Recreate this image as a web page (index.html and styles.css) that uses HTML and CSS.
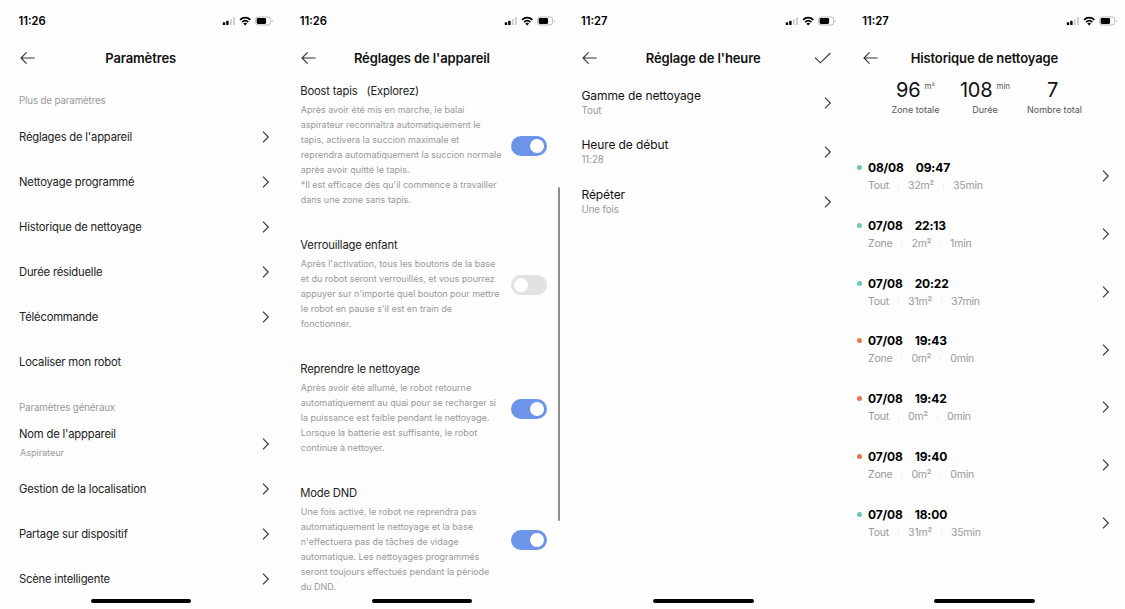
FILE: index.html
```html
<!DOCTYPE html>
<html lang="fr">
<head>
  <meta charset="UTF-8">
  <meta name="viewport" content="width=device-width, initial-scale=1.0">
  <title>Paramètres du robot</title>
  <link rel="stylesheet" href="styles.css">
</head>
<body>
  <!-- Shared icons -->
  <svg class="icon-defs" width="0" height="0">
    <symbol id="icon-back" viewBox="0 0 16 14">
      <path d="M6.6 1.4 L1 7 L6.6 12.6 M1 7 H14.6"/>
    </symbol>
    <symbol id="icon-chevron" viewBox="0 0 8 14">
      <path d="M1 1.6 L6.3 7 L1 12.4"/>
    </symbol>
    <symbol id="icon-check" viewBox="0 0 18 12">
      <path d="M1 5.6 L6.4 10.8 L16.4 1"/>
    </symbol>
    <symbol id="icon-status" viewBox="0 0 52 10">
      <rect x="0.8" y="6.2" width="2.4" height="2.8" rx="0.6"/>
      <rect x="4.2" y="4.8" width="2.4" height="4.2" rx="0.6"/>
      <rect x="7.8" y="3" width="2" height="6" rx="0.5" fill="#d0d0d0"/>
      <rect x="11" y="1" width="2" height="8" rx="0.5" fill="#d0d0d0"/>
      <path d="M18.1 3.8 a7.3 7.3 0 0 1 10.2 0" fill="none" stroke="#000" stroke-width="1.8"/>
      <path d="M20.1 6.1 a4.6 4.6 0 0 1 6.2 0" fill="none" stroke="#000" stroke-width="1.6"/>
      <path d="M23.2 9.5 L21.3 7.6 a2.8 2.8 0 0 1 3.8 0 z"/>
      <rect x="33.6" y="1" width="15" height="8" rx="2.4" fill="none" stroke="#aaa" stroke-width="0.8"/>
      <rect x="34.7" y="2.1" width="9.4" height="5.8" rx="1.3"/>
      <path d="M49.9 3.7 a1.5 1.5 0 0 1 0 2.6 z" fill="#aaa"/>
    </symbol>
  </svg>

  <main class="screens">
    <!-- Settings -->
    <section class="screen">
      <div class="status-bar"><span>11:26</span><svg class="status-icons"><use href="#icon-status"/></svg></div>
      <header class="nav-bar">
        <svg class="back"><use href="#icon-back"/></svg>
        <h1>Paramètres</h1>
      </header>
      <h2 class="group-label">Plus de paramètres</h2>
      <ul class="menu">
        <li><span>Réglages de l'appareil</span><svg class="chevron"><use href="#icon-chevron"/></svg></li>
        <li><span>Nettoyage programmé</span><svg class="chevron"><use href="#icon-chevron"/></svg></li>
        <li><span>Historique de nettoyage</span><svg class="chevron"><use href="#icon-chevron"/></svg></li>
        <li><span>Durée résiduelle</span><svg class="chevron"><use href="#icon-chevron"/></svg></li>
        <li><span>Télécommande</span><svg class="chevron"><use href="#icon-chevron"/></svg></li>
        <li><span>Localiser mon robot</span></li>
      </ul>
      <h2 class="group-label general">Paramètres généraux</h2>
      <ul class="menu">
        <li>
          <div class="name-cell"><span>Nom de l'apppareil</span><small>Aspirateur</small></div>
          <svg class="chevron"><use href="#icon-chevron"/></svg>
        </li>
        <li><span>Gestion de la localisation</span><svg class="chevron"><use href="#icon-chevron"/></svg></li>
        <li><span>Partage sur dispositif</span><svg class="chevron"><use href="#icon-chevron"/></svg></li>
        <li><span>Scène intelligente</span><svg class="chevron"><use href="#icon-chevron"/></svg></li>
      </ul>
      <div class="home-indicator"></div>
    </section>

    <!-- Device settings -->
    <section class="screen">
      <div class="status-bar"><span>11:26</span><svg class="status-icons"><use href="#icon-status"/></svg></div>
      <header class="nav-bar">
        <svg class="back"><use href="#icon-back"/></svg>
        <h1>Réglages de l'appareil</h1>
      </header>
      <div class="options">
        <div class="option">
          <div class="option-text">
            <h3>Boost tapis<span class="paren">(Explorez)</span></h3>
            <p>Après avoir été mis en marche, le balai<br>aspirateur reconnaîtra automatiquement le<br>tapis, activera la succion maximale et<br>reprendra automatiquement la succion normale<br>après avoir quitté le tapis.<br>*Il est efficace dès qu'il commence à travailler<br>dans une zone sans tapis.</p>
          </div>
          <div class="toggle on"></div>
        </div>
        <div class="option">
          <div class="option-text">
            <h3>Verrouillage enfant</h3>
            <p>Après l'activation, tous les boutons de la base<br>et du robot seront verrouillés, et vous pourrez<br>appuyer sur n'importe quel bouton pour mettre<br>le robot en pause s'il est en train de<br>fonctionner.</p>
          </div>
          <div class="toggle"></div>
        </div>
        <div class="option">
          <div class="option-text">
            <h3>Reprendre le nettoyage</h3>
            <p>Après avoir été allumé, le robot retourne<br>automatiquement au quai pour se recharger si<br>la puissance est faible pendant le nettoyage.<br>Lorsque la batterie est suffisante, le robot<br>continue à nettoyer.</p>
          </div>
          <div class="toggle on"></div>
        </div>
        <div class="option">
          <div class="option-text">
            <h3>Mode DND</h3>
            <p>Une fois activé, le robot ne reprendra pas<br>automatiquement le nettoyage et la base<br>n'effectuera pas de tâches de vidage<br>automatique. Les nettoyages programmés<br>seront toujours effectués pendant la période<br>du DND.</p>
          </div>
          <div class="toggle on"></div>
        </div>
      </div>
      <div class="scrollbar"></div>
      <div class="home-indicator"></div>
    </section>

    <!-- Schedule -->
    <section class="screen">
      <div class="status-bar"><span>11:27</span><svg class="status-icons"><use href="#icon-status"/></svg></div>
      <header class="nav-bar">
        <svg class="back"><use href="#icon-back"/></svg>
        <h1>Réglage de l'heure</h1>
        <svg class="check"><use href="#icon-check"/></svg>
      </header>
      <ul class="schedule">
        <li><div><h3>Gamme de nettoyage</h3><p>Tout</p></div><svg class="chevron"><use href="#icon-chevron"/></svg></li>
        <li><div><h3>Heure de début</h3><p>11:28</p></div><svg class="chevron"><use href="#icon-chevron"/></svg></li>
        <li><div><h3>Répéter</h3><p>Une fois</p></div><svg class="chevron"><use href="#icon-chevron"/></svg></li>
      </ul>
      <div class="home-indicator"></div>
    </section>

    <!-- Cleaning history -->
    <section class="screen">
      <div class="status-bar"><span>11:27</span><svg class="status-icons"><use href="#icon-status"/></svg></div>
      <header class="nav-bar">
        <svg class="back"><use href="#icon-back"/></svg>
        <h1>Historique de nettoyage</h1>
      </header>
      <div class="stats">
        <div class="stat"><div class="value">96<sup>m²</sup></div><div class="label">Zone totale</div></div>
        <div class="stat"><div class="value">108<sup>min</sup></div><div class="label">Durée</div></div>
        <div class="stat last"><div class="value">7</div><div class="label">Nombre total</div></div>
      </div>
      <ul class="history">
        <li class="done"><div><h3><span>08/08</span><span>09:47</span></h3><p><span>Tout</span><i></i><span>32m²</span><i></i><span>35min</span></p></div><svg class="chevron"><use href="#icon-chevron"/></svg></li>
        <li class="done"><div><h3><span>07/08</span><span>22:13</span></h3><p><span>Zone</span><i></i><span>2m²</span><i></i><span>1min</span></p></div><svg class="chevron"><use href="#icon-chevron"/></svg></li>
        <li class="done"><div><h3><span>07/08</span><span>20:22</span></h3><p><span>Tout</span><i></i><span>31m²</span><i></i><span>37min</span></p></div><svg class="chevron"><use href="#icon-chevron"/></svg></li>
        <li class="failed"><div><h3><span>07/08</span><span>19:43</span></h3><p><span>Zone</span><i></i><span>0m²</span><i></i><span>0min</span></p></div><svg class="chevron"><use href="#icon-chevron"/></svg></li>
        <li class="failed"><div><h3><span>07/08</span><span>19:42</span></h3><p><span>Tout</span><i></i><span>0m²</span><i></i><span>0min</span></p></div><svg class="chevron"><use href="#icon-chevron"/></svg></li>
        <li class="failed"><div><h3><span>07/08</span><span>19:40</span></h3><p><span>Zone</span><i></i><span>0m²</span><i></i><span>0min</span></p></div><svg class="chevron"><use href="#icon-chevron"/></svg></li>
        <li class="done"><div><h3><span>07/08</span><span>18:00</span></h3><p><span>Tout</span><i></i><span>31m²</span><i></i><span>35min</span></p></div><svg class="chevron"><use href="#icon-chevron"/></svg></li>
      </ul>
      <div class="home-indicator"></div>
    </section>
  </main>
</body>
</html>
```
FILE: styles.css
```css
* {
  margin: 0;
  padding: 0;
  box-sizing: border-box;
}

body {
  font-family: Inter, "Liberation Sans", sans-serif;
  background-color: #fdfdfd;
  color: #222;
  overflow: hidden;
}

ul {
  list-style: none;
}

.icon-defs {
  position: absolute;
}

.screens {
  display: grid;
  grid-template-columns: repeat(4, 1fr);
  height: 609px;
}

.screen {
  position: relative;
  height: 609px;
  overflow: hidden;
}

/* Status bar and title */
.status-bar {
  display: flex;
  justify-content: space-between;
  align-items: center;
  height: 40px;
  padding: 1px 7px 0 18.5px;
  font-size: 11.25px;
  font-weight: 600;
  color: #000;
}

.status-icons {
  width: 52px;
  height: 10px;
}

.nav-bar {
  display: grid;
  grid-template-columns: 40px 1fr 40px;
  align-items: center;
  height: 36px;
}

.nav-bar h1 {
  font-size: 13px;
  font-weight: 600;
  line-height: 18px;
  letter-spacing: -0.12px;
  text-align: center;
  white-space: nowrap;
  color: #111;
}

.back,
.check,
.chevron {
  fill: none;
  stroke: #333;
  stroke-width: 1.1;
}

.back {
  width: 16px;
  height: 14px;
  margin-left: 19.5px;
}

.check {
  width: 18px;
  height: 12px;
  margin-left: 10px;
}

.chevron {
  width: 8px;
  height: 14px;
  flex-shrink: 0;
}

.home-indicator {
  position: absolute;
  left: 90.5px;
  bottom: 6px;
  width: 100.5px;
  height: 4px;
  border-radius: 2px;
  background-color: #000;
}

/* Settings menu */
.group-label {
  height: 38.5px;
  padding: 16.5px 19px 0;
  font-size: 9.75px;
  font-weight: 400;
  line-height: 16px;
  letter-spacing: -0.14px;
  color: #999;
}

.group-label.general {
  height: 36.5px;
  padding-top: 14px;
  border-top: 1px solid #f8f8f8;
}

.menu li {
  display: flex;
  justify-content: space-between;
  align-items: center;
  height: 45px;
  padding: 0 11px 0 19px;
  font-size: 11.25px;
  letter-spacing: -0.2px;
}

.name-cell {
  display: flex;
  flex-direction: column;
  gap: 5px;
  line-height: 14px;
}

.name-cell small {
  padding-left: 1px;
  font-size: 9px;
  letter-spacing: 0;
  color: #999;
}

/* Device options */
.options {
  display: flex;
  flex-direction: column;
  gap: 31px;
  padding: 8px 16px 0 19px;
}

.option {
  display: flex;
  justify-content: space-between;
  align-items: center;
}

.option h3 {
  margin-bottom: 3px;
  font-size: 11.25px;
  font-weight: 400;
  line-height: 15px;
  letter-spacing: -0.18px;
}

.option .paren {
  padding-left: 9px;
}

.option p {
  padding-left: 0.5px;
  font-size: 9px;
  line-height: 15px;
  letter-spacing: -0.01px;
  white-space: nowrap;
  color: #999;
}

.option-text {
  width: 200px;
}

.toggle {
  flex-shrink: 0;
  width: 36px;
  height: 20px;
  padding: 3px;
  border-radius: 10px;
  background-color: #e2e2e2;
}

.toggle::after {
  content: "";
  display: block;
  width: 14px;
  height: 14px;
  border-radius: 50%;
  background-color: #fff;
}

.toggle.on {
  background-color: #6c94e9;
}

.toggle.on::after {
  margin-left: auto;
}

.scrollbar {
  position: absolute;
  top: 187px;
  right: 2.5px;
  width: 2.5px;
  height: 334px;
  border-radius: 2px;
  background-color: #8e8e8e;
}

/* Schedule */
.schedule {
  padding-top: 2px;
}

.schedule li {
  display: flex;
  justify-content: space-between;
  align-items: center;
  height: 49.5px;
  padding: 0 11.5px 0 19px;
}

.schedule h3 {
  font-size: 12px;
  font-weight: 400;
  line-height: 16px;
  letter-spacing: -0.1px;
  color: #111;
}

.schedule p {
  font-size: 9.75px;
  line-height: 14px;
  letter-spacing: -0.1px;
  color: #999;
}

/* History */
.stats {
  display: flex;
  height: 71.5px;
  padding-left: 37px;
}

.stat {
  width: 69.5px;
  text-align: center;
}

.stat .value {
  font-size: 20px;
  line-height: 28px;
  letter-spacing: -0.2px;
  color: #111;
}

.stat.last .value {
  padding-right: 4px;
}

.stat sup {
  display: inline-block;
  margin-left: 4px;
  font-size: 8px;
  line-height: 8px;
  letter-spacing: 0;
  vertical-align: 8px;
  color: #555;
}

.stat .label {
  font-size: 9px;
  line-height: 12px;
  white-space: nowrap;
  color: #555;
}

.history li {
  display: flex;
  justify-content: space-between;
  align-items: center;
  height: 57.75px;
  padding: 0 15px 0 24.25px;
}

.history li > div {
  padding-top: 1.5px;
}

.history h3 {
  position: relative;
  display: flex;
  gap: 12px;
  font-size: 12px;
  font-weight: 700;
  line-height: 18px;
  letter-spacing: -0.15px;
  color: #000;
}

.history h3::before {
  content: "";
  position: absolute;
  left: -11px;
  top: 6px;
  width: 5px;
  height: 5px;
  border-radius: 50%;
}

.history .done h3::before {
  background-color: #6bc8b8;
}

.history .failed h3::before {
  background-color: #e9764a;
}

.history p {
  display: flex;
  align-items: center;
  font-size: 10.5px;
  line-height: 18px;
  letter-spacing: -0.2px;
  color: #999;
}

.history i {
  width: 1px;
  height: 6px;
  margin: 0 9px;
  background-color: #f0f0f0;
}
```
